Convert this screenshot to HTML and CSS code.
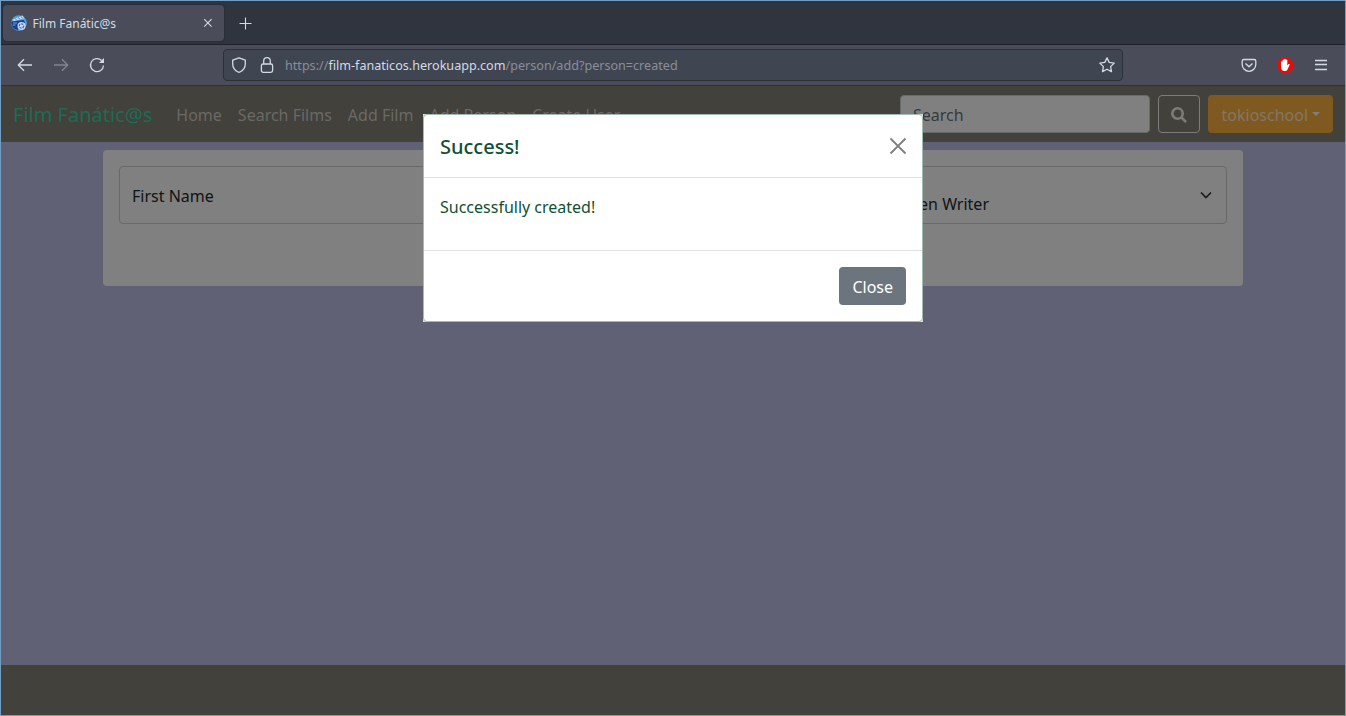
FILE: index.html
```html
<!DOCTYPE html>
<html lang="en">
<head>
<meta charset="utf-8">
<title>Film Fanátic@s</title>
<link rel="stylesheet" href="styles.css">
</head>
<body>
<div class="window">
  <div class="tabs">
    <div class="tab">
      <svg class="favicon" width="16" height="16" viewBox="0 0 16 16"><circle cx="8" cy="8" r="7.800" fill="#4aa3e8"/><path d="M.5 6.500L5 6l8-1 1 3-4 1-3 6A8 8 0 0 1 .3 8z" fill="#20398c"/><path d="M1.500 4.800L11.500 .5 13.200 3.200 3 6z" fill="#c4e3f8"/><path d="M4.500 3.700l1 1.500M7.500 2.500l1 1.700M10.300 1.500l1 1.800" stroke="#3a6ec0"/><path d="M2 8h4M1.500 10h3" stroke="#6aa7e6"/><circle cx="10.500" cy="11" r="4" fill="#c4daf6"/><circle cx="10.500" cy="11" r="2.200" fill="none" stroke="#3f62b5" stroke-width="1.200" stroke-dasharray="2 1"/></svg>
      <span class="tab-title">Film Fanátic@s</span>
      <svg class="tab-close" width="10" height="10" viewBox="0 0 10 10"><path d="M1.200 1.200l7.400 7.400M8.600 1.200L1.200 8.600"/></svg>
    </div>
    <svg class="new-tab" width="13" height="13" viewBox="0 0 13 13"><path d="M6.500 .5v12M.5 6.500h12"/></svg>
  </div>
  <div class="toolbar">
    <div class="nav-icons">
      <svg width="16" height="16" viewBox="0 0 16 16"><path d="M15 8H1.500M7 2.200L1.300 8l5.700 5.800"/></svg>
      <svg class="dim" width="16" height="16" viewBox="0 0 16 16"><path d="M1 8h13.500M9 2.200L14.700 8 9 13.800"/></svg>
      <svg width="16" height="16" viewBox="0 0 16 16"><path d="M14.500 8.500A6.500 6.500 0 1 1 12.600 3.500"/><path class="solid" d="M15 1v5h-5z"/></svg>
    </div>
    <div class="urlbar">
      <svg width="16" height="16" viewBox="0 0 16 16"><path d="M8 .8L14.300 3.200V7c0 3.900-2.500 6.500-5.300 8q-1 .5-2 0C4.200 13.500 1.700 10.900 1.700 7V3.200z"/></svg>
      <svg class="lock" width="16" height="16" viewBox="0 0 16 16"><rect x="2.400" y="7" width="11.200" height="8.300" rx="1.800"/><path d="M4.700 7V4a3.300 3.300 0 0 1 6.600 0v3"/></svg>
      <span class="url">https://<b>film-fanaticos.herokuapp.com</b>/person/add?person=created</span>
      <svg width="16" height="16" viewBox="0 0 16 16"><path d="M8 .9l2.200 4.500 5 .7-3.600 3.500.9 5-4.500-2.400-4.500 2.400.9-5L.8 6.100l5-.7z"/></svg>
    </div>
    <div class="actions">
      <svg width="16" height="16" viewBox="0 0 16 16"><path d="M2.700 2.500h10.600q1.500 0 1.500 1.500v3.500a6.800 6.800 0 0 1-13.600 0V4q0-1.500 1.500-1.500z"/><path d="M4.500 6.500L8 9.800l3.500-3.300"/></svg>
      <svg width="16" height="16" viewBox="0 0 16 16"><path class="octagon" d="M4.700 0h6.600L16 4.700v6.600L11.300 16H4.700L0 11.300V4.700z"/><path class="hand" d="M4 9V4.800q.7-.9 1.500 0V3q.8-.9 1.600 0v-.8q.8-.8 1.600 0V3q.8-.8 1.600 0v5.500l1.300-1.500q1-.4 1.200.5l-2.300 5q-.6 1.500-2.300 1.500H7.300Q4 14 4 9z"/></svg>
      <svg width="16" height="16" viewBox="0 0 16 16"><path d="M2 3.500h12M2 7.500h12M2 12.500h12"/></svg>
    </div>
  </div>
  <div class="page">
    <nav class="navbar">
      <span class="brand">Film Fanátic@s</span>
      <div class="links"><span>Home</span><span>Search Films</span><span>Add Film</span><span>Add Person</span><span>Create User</span></div>
      <div class="search">Search</div>
      <div class="search-btn"><svg width="16" height="16" viewBox="0 0 16 16"><circle cx="6.500" cy="6.500" r="5.200"/><path d="M10.500 10.500l4.600 4.600"/></svg></div>
      <div class="user">tokioschool<i class="caret"></i></div>
    </nav>
    <main class="main">
      <div class="card">
        <div class="fields">
          <div class="field">First Name</div>
          <div class="field select"><span class="option">Screen Writer</span><svg width="16" height="16" viewBox="0 0 16 16"><path d="M3 5.500l5 5 5-5"/></svg></div>
        </div>
      </div>
    </main>
    <footer class="footer"></footer>
    <div class="modal">
      <div class="modal-content">
        <div class="modal-header"><h5>Success!</h5><svg width="18" height="18" viewBox="0 0 18 18"><path d="M1.500 1.500l15 15M16.500 1.500l-15 15"/></svg></div>
        <div class="modal-body">Successfully created!</div>
        <div class="modal-footer"><button class="close-btn">Close</button></div>
      </div>
    </div>
  </div>
</div>
</body>
</html>
```
FILE: styles.css
```css
* { box-sizing: border-box; }
body { margin: 0; font: 16px/24px "Noto Sans", sans-serif; }
svg { display: block; flex: none; fill: none; }
.window { width: 1346px; height: 716px; border: 1px solid #739dc3; display: flex; flex-direction: column; overflow: hidden; }
.tabs { height: 44px; background: #2f343f; border-bottom: 1px solid #20232b; display: flex; align-items: center; padding: 0 2px; }
.tab { width: 221px; height: 36px; border-radius: 4px; background: #4a4d59; box-shadow: 0 0 2px #1f222a; display: flex; align-items: center; padding: 0 11px 0 8px; }
.tab-title { margin-left: 5.5px; padding-top: 2px; font-size: 12px; color: #d3dae3; flex: 1; }
.tab-close, .new-tab { stroke: #d3dae3; stroke-width: 1.1; }
.new-tab { margin: 2px 0 0 15px; }
.toolbar { height: 41px; background: #4a4d59; border-bottom: 1px solid #2e313b; display: flex; align-items: center; }
.toolbar svg { stroke: #d3dae3; stroke-width: 1.3; stroke-linejoin: round; }
.nav-icons { display: flex; gap: 20px; padding-left: 16px; width: 222px; }
.toolbar .dim { opacity: .4; }
.toolbar .solid { fill: #d3dae3; stroke: none; }
.urlbar { width: 900px; height: 32px; border: 1px solid #2c303b; border-radius: 4px; background: #404552; display: flex; align-items: center; padding: 0 7px; }
.lock { margin-left: 12px; }
.url { margin-left: 10px; padding-top: 2px; flex: 1; font-size: 12.6px; line-height: 18px; color: #898e99; }
.url b { font-weight: 400; color: #d3dae3; }
.actions { margin-left: auto; display: flex; gap: 20px; padding-right: 16px; }
.toolbar .octagon { fill: #e40d0d; stroke: none; }
.toolbar .hand { fill: #fff; stroke: none; }
.page { position: relative; flex: 1; display: flex; flex-direction: column; background: #616175; }
.navbar { height: 56px; background: #42413c; display: flex; align-items: center; padding: 0 12px; }
.brand { padding-top: 2px; font-size: 20px; line-height: 30px; color: #1e6b55; }
.links { display: flex; gap: 16px; margin-left: 24px; padding-top: 2px; color: #6a6966; flex: 1; }
.search { width: 250px; height: 38px; border: 1px solid #676a6d; border-radius: 4px; background: #808080; color: #363a3e; padding: 7px 12px 5px; }
.search-btn { width: 42px; height: 38px; margin: 0 8px; border: 1px solid #7c7c7a; border-radius: 4px; display: flex; align-items: center; justify-content: center; }
.search-btn svg { stroke: #7c7c78; stroke-width: 2.6; margin-top: 2px; }
.user { width: 125px; height: 38px; border-radius: 4px; background: #805920; color: #807768; padding: 2px 13px 0 13.5px; display: flex; align-items: center; gap: 4px; }
.caret { border: 4.8px solid transparent; border-top-color: #807f7b; border-bottom: 0; margin-top: -3px; }
.main { flex: 1; padding: 8px 102px; }
.card { height: 136px; background: #808080; border-radius: 4px; padding: 16px; }
.fields { display: flex; height: 58px; }
.field { width: 500px; border: 1px solid #67696b; border-radius: 4px; color: #111315; padding: 17px 12px; }
.select { flex: 1; display: flex; padding: 25px 12px 8px 0; justify-content: space-between; }
.option { width: 369px; text-align: right; }
.select svg { stroke: #1a1d20; stroke-width: 1.7; margin-top: -5px; }
.footer { height: 50px; background: #42413c; }
.modal { position: absolute; left: 422px; top: 28px; width: 500px; height: 208px; background: #d1e7dd; color: #0f5132; }
.modal-content { height: 208px; border: 1px solid #a3bbb0; border-radius: 4px; background: #fff; display: flex; flex-direction: column; }
.modal-header { height: 63px; border-bottom: 1px solid #dee2e6; padding: 0 15px 0 16px; display: flex; align-items: center; justify-content: space-between; }
.modal-header h5 { margin: 2px 0 0; font-size: 20px; font-weight: 500; line-height: 30px; }
.modal-header svg { stroke: #7f7f7f; stroke-width: 1.8; }
.modal-body { height: 73px; padding: 17px 16px; border-bottom: 1px solid #dee2e6; }
.modal-footer { flex: 1; padding: 16px; display: flex; justify-content: flex-end; align-items: flex-start; }
.close-btn { width: 67px; height: 38px; border: 0; border-radius: 4px; background: #6c757d; color: #fff; font: 16px/24px "Noto Sans", sans-serif; padding: 2px 0 0 .5px; }
```
